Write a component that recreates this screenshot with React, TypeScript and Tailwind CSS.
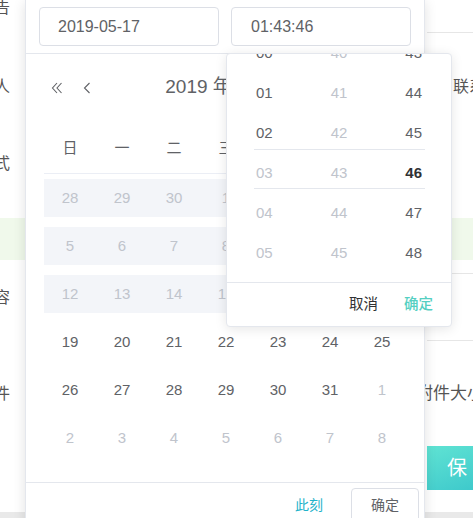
const font = "font-['Liberation_Sans','Noto_Sans_CJK_SC',sans-serif]";

type Cell = { n: number; muted?: boolean };

const range = (a: number, b: number) => Array.from({ length: b - a + 1 }, (_, i) => a + i);

const rows: { cells: Cell[]; disabled?: boolean }[] = [
  { cells: [28, 29, 30, 1, 2, 3, 4].map((n) => ({ n, muted: true })), disabled: true },
  { cells: range(5, 11).map((n) => ({ n, muted: true })), disabled: true },
  { cells: range(12, 18).map((n) => ({ n, muted: true })), disabled: true },
  { cells: range(19, 25).map((n) => ({ n })) },
  { cells: [...range(26, 31).map((n) => ({ n })), { n: 1, muted: true }] },
  { cells: range(2, 8).map((n) => ({ n, muted: true })) },
];

const weekdays = ["日", "一", "二", "三", "四", "五", "六"];

type Tick = { v: string; tone: "normal" | "muted" | "active" };

const hours: Tick[] = ["00", "01", "02", "03", "04", "05", "06"].map((v, i) => ({
  v,
  tone: i < 3 ? "normal" : "muted",
}));
const minutes: Tick[] = range(40, 46).map((n) => ({ v: String(n), tone: "muted" }));
const seconds: Tick[] = range(43, 49).map((n) => ({
  v: String(n),
  tone: n === 46 ? "active" : "normal",
}));

function DoubleLeft() {
  return (
    <svg width="12" height="12" viewBox="0 0 12 12" fill="none" stroke="#606266" strokeWidth="1.1">
      <path d="M6 1 L1.5 6 L6 11" />
      <path d="M10.5 1 L6 6 L10.5 11" />
    </svg>
  );
}

function Left() {
  return (
    <svg width="8" height="12" viewBox="0 0 8 12" fill="none" stroke="#606266" strokeWidth="1.1">
      <path d="M6.5 1 L1.5 6 L6.5 11" />
    </svg>
  );
}

function Spinner({ items }: { items: Tick[] }) {
  return (
    <div className="flex-1 overflow-hidden">
      <ul className="-mt-[21px]">
        {items.map((t) => (
          <li
            key={t.v}
            className={
              "flex h-[40px] items-center justify-center text-[15px] " +
              (t.tone === "muted"
                ? "text-[#c0c4cc]"
                : t.tone === "active"
                  ? "font-bold text-[#303133]"
                  : "text-[#606266]")
            }
          >
            {t.v}
          </li>
        ))}
      </ul>
    </div>
  );
}

export default function App() {
  return (
    <div className={`relative h-[518px] w-[473px] overflow-hidden bg-white text-[#606266] ${font}`}>
      {/* page behind the picker */}
      <div className="flex flex-col text-[16px] text-[#555]">
        <div className="flex h-[33px]">
          <div className="flex w-[10px] justify-end">
            <span className="-mt-[4px] whitespace-nowrap">公告</span>
          </div>
          <div className="ml-[417px] flex-1 border-b border-[#e6e6e6]" />
        </div>
        <div className="flex h-[106px] items-center pt-[1px]">
          <div className="flex w-[10px] justify-end">
            <span className="whitespace-nowrap">联系人</span>
          </div>
          <span className="ml-[443px] whitespace-nowrap">联系电话</span>
        </div>
        <div className="flex h-[50px] items-center">
          <div className="flex w-[10px] justify-end">
            <span className="whitespace-nowrap">联系方式</span>
          </div>
        </div>
        <div className="mt-[29px] h-[42px] bg-[#f0f9eb]" />
        <div className="ml-[427px] h-[14px] border-b border-[#e6e6e6]" />
        <div className="flex h-[67px]">
          <div className="flex w-[10px] items-center justify-end pb-[20px]">
            <span className="whitespace-nowrap">内容</span>
          </div>
          <div className="ml-[417px] flex-1 border-b border-[#e6e6e6]" />
        </div>
        <div className="flex h-[105px] items-center">
          <div className="flex w-[10px] justify-end">
            <span className="whitespace-nowrap">附件</span>
          </div>
          <span className="ml-[406px] whitespace-nowrap text-[17px]">附件大小：</span>
        </div>
        <div className="flex">
          <button className="ml-[427px] flex h-[44px] w-[120px] shrink-0 items-center whitespace-nowrap bg-gradient-to-br from-[#5fe3d3] to-[#2cbec8] pl-[20px] text-[20px] tracking-[6px] text-white">
            保存
          </button>
        </div>
        <div className="mt-[22px] h-[6px] bg-[#e9e9e9]" />
      </div>

      {/* date picker panel */}
      <div className="absolute left-[25px] top-0 w-[400px] border-x border-[#e4e7ed] bg-white shadow-[0_2px_12px_rgba(0,0,0,0.12)]">
        <div className="flex h-[54px] justify-between border-b border-[#e4e7ed] px-[13px] pt-[7px]">
          <div className="flex h-[39px] w-[180px] items-center rounded-[4px] border border-[#dcdfe6] pl-[18px] text-[16px] text-[#606266]">
            2019-05-17
          </div>
          <div className="flex h-[39px] w-[180px] items-center rounded-[4px] border border-[#dcdfe6] pl-[19px] text-[16px] text-[#606266]">
            01:43:46
          </div>
        </div>

        <div className="grid h-[66px] grid-cols-[1fr_auto_1fr] items-center">
          <div className="flex items-center gap-[20px] pl-[25px] pt-[2px]">
            <DoubleLeft />
            <Left />
          </div>
          <div className="mr-[8px] text-[19px] text-[#606266]">
            <span className="px-[5px]">2019 年</span>
            <span className="px-[5px]">5 月</span>
          </div>
          <div />
        </div>

        <div className="pl-[18px]">
          <div className="grid h-[54px] w-[364px] grid-cols-7 border-b border-[#ebeef5] pt-[3px]">
            {weekdays.map((d) => (
              <div key={d} className="flex items-center justify-center text-[15px] text-[#606266]">
                {d}
              </div>
            ))}
          </div>
          {rows.map((r, i) => (
            <div key={i} className="h-[48px] w-[364px] py-[5px]">
              <div className={"grid h-[38px] grid-cols-7 " + (r.disabled ? "bg-[#f3f5f9]" : "")}>
                {r.cells.map((c, j) => (
                  <div
                    key={j}
                    className={
                      "flex items-center justify-center text-[15px] " +
                      (c.muted ? "text-[#c0c4cc]" : "text-[#606266]")
                    }
                  >
                    {c.n}
                  </div>
                ))}
              </div>
            </div>
          ))}
        </div>

        <div className="mt-[20px] flex h-[44px] items-start justify-end border-t border-[#e4e7ed] pr-[5px] pt-[5px]">
          <span className="mr-[28px] flex h-[34px] items-center text-[14px] text-[#1fb3ca]">此刻</span>
          <button className="h-[34px] w-[68px] rounded-[4px] border border-[#dcdfe6] bg-white text-[14px] text-[#606266]">
            确定
          </button>
        </div>
      </div>

      {/* time spinner popover */}
      <div className="absolute left-[226px] top-[53px] w-[226px] rounded-[4px] border border-[#e4e7ed] bg-white shadow-[0_2px_12px_rgba(0,0,0,0.1)]">
        <div className="relative flex h-[229px] border-b border-[#e4e7ed]">
          <Spinner items={hours} />
          <Spinner items={minutes} />
          <Spinner items={seconds} />
          <div className="pointer-events-none absolute left-[27px] right-[26px] top-[95px] h-[40px] border-y border-[#e4e7ed]" />
        </div>
        <div className="flex h-[43px] items-center justify-end gap-[26px] pr-[18px] text-[14.5px]">
          <span className="text-[#303133]">取消</span>
          <span className="font-medium text-[#55cfc2]">确定</span>
        </div>
      </div>
    </div>
  );
}
